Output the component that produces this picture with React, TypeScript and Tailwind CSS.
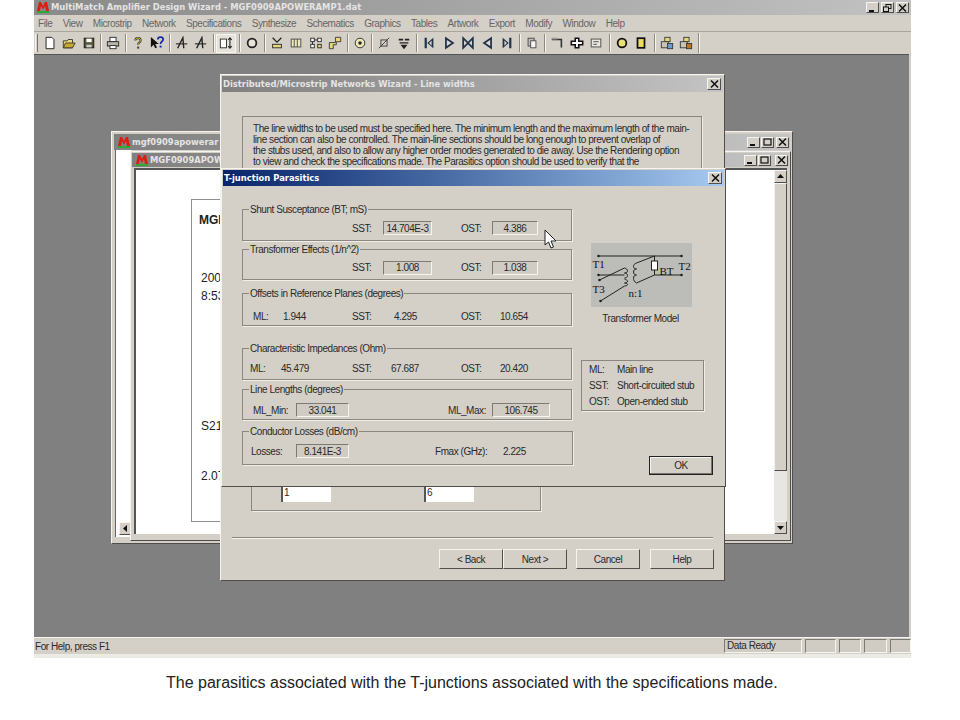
import React from "react";

const raised = "border border-t-[#f5f4f0] border-l-[#f5f4f0] border-r-[#4f4e4a] border-b-[#4f4e4a] bg-[#d4d0c8]";
const sunken = "border border-t-[#7c7a74] border-l-[#7c7a74] border-r-[#f5f4f0] border-b-[#f5f4f0] bg-[#d0ccc4]";
const ui = "font-['Liberation_Sans',Arial,sans-serif] text-[10px] tracking-[-0.45px] text-[#2a2a2a]";
const titleFont = "font-['DejaVu_Sans',Verdana,sans-serif] font-bold text-[8.4px] tracking-normal text-[#e4e4e4] whitespace-nowrap";

const Logo = () => (
    <svg width="14" height="13" viewBox="0 0 14 13" className="shrink-0">
        <path d="M1 10 L3 1 L5 1 L7 5 L9 1 L11 1 L13 10 L10 10 L9 5 L7 9 L5 5 L4 10 Z" fill="#e01b10" />
        <rect x="1" y="10" width="12" height="2" fill="#2fa82f" />
    </svg>
);

const WinBtn = ({ kind, cls = "w-[13px] h-[11px]" }: { kind: "min" | "max" | "restore" | "close"; cls?: string }) => (
    <div className={`${raised} ${cls} flex items-center justify-center`}>
        <svg width="9" height="8" viewBox="0 0 9 8">
            {kind === "min" && <rect x="1" y="6" width="5" height="2" fill="#111" />}
            {kind === "max" && <rect x="1" y="1" width="7" height="6" fill="none" stroke="#111" strokeWidth="1.2" />}
            {kind === "restore" && (
                <g fill="none" stroke="#111">
                    <rect x="3" y="0.5" width="5" height="4" />
                    <rect x="0.5" y="3" width="5" height="4.5" fill="#d4d0c8" />
                </g>
            )}
            {kind === "close" && <path d="M1 0.5 L8 7.5 M8 0.5 L1 7.5" stroke="#111" strokeWidth="1.5" />}
        </svg>
    </div>
);

// toolbar glyphs, all drawn on a 16x16 grid
const icons: Record<string, React.ReactNode> = {
    newDoc: <path d="M3.5 1.5 H10 L12.5 4 V14.5 H3.5 Z" fill="#fff" stroke="#111" />,
    open: <g stroke="#333"><path d="M1.5 5.5 H6 L7 4 H12 V13.5 H1.5 Z" fill="#e8d878" /><path d="M1.5 13.5 L4 8 H15 L12 13.5 Z" fill="#c8a830" /></g>,
    save: <g><rect x="2.5" y="2.5" width="11" height="11" fill="#5a5a38" stroke="#111" /><rect x="5" y="3" width="6" height="4" fill="#fff" /><rect x="5" y="10" width="6" height="3" fill="#ccc" /></g>,
    print: <g stroke="#222"><rect x="4.5" y="1.5" width="7" height="5" fill="#fff" /><rect x="1.5" y="6.5" width="13" height="5" fill="#b8b4ac" /><rect x="4.5" y="11" width="7" height="3.5" fill="#fff" /></g>,
    help: <g><path d="M5 5 C5 1.5 11 1.5 11 5 C11 7.5 8 7 8 10" fill="none" stroke="#333" strokeWidth="2.4" /><path d="M5 5 C5 1.5 11 1.5 11 5 C11 7.5 8 7 8 10" fill="none" stroke="#e8d020" strokeWidth="1" /><rect x="7" y="12" width="2.4" height="2.4" fill="#444" /></g>,
    whats: <g><path d="M1 1 L1 13 L4 10 L6 14 L8 13 L6 9 L10 9 Z" fill="#111" /><path d="M9 4 C9 0.5 15 0.5 15 4 C15 6.5 12 6 12 9" fill="none" stroke="#1a2aa0" strokeWidth="2" /><rect x="11" y="11" width="2.2" height="2.2" fill="#1a2aa0" /></g>,
    a: <g fill="none" stroke="#222" strokeWidth="1.6"><path d="M3 14 L9 2 L10 14" /><path d="M1 9 H14" strokeWidth="1.2" /></g>,
    rect: <g><rect x="1.5" y="3.5" width="7" height="10" fill="#fff" stroke="#222" /><path d="M12.5 2 V14 M10.5 4.5 L12.5 2 L14.5 4.5 M10.5 11.5 L12.5 14 L14.5 11.5" fill="none" stroke="#222" strokeWidth="1.2" /></g>,
    ring: <circle cx="8" cy="8" r="5" fill="#e8e4d8" stroke="#222" strokeWidth="2" />,
    stub: <g stroke="#222" fill="none"><path d="M3 2 L8 7 L13 2" strokeWidth="1.4" /><rect x="3" y="9.5" width="10" height="4" fill="#e8d878" /></g>,
    bars: <g stroke="#444"><rect x="2.5" y="3.5" width="11" height="9" fill="#ece8b8" /><path d="M6 3.5 V12.5 M9.5 3.5 V12.5" /></g>,
    net: <g stroke="#222" fill="#fff"><rect x="2" y="2.5" width="4" height="4" /><rect x="10" y="2.5" width="4" height="4" /><rect x="2" y="9.5" width="4" height="4" /><rect x="10" y="9.5" width="4" height="4" fill="#e8d878" /><path d="M6 4.5 H10 M4 6.5 V9.5" /></g>,
    pipe: <path d="M8.5 1.5 H14.5 V6.5 H9.5 V10 H6 V14.5 H1.5 V7.5 H8.5 Z" fill="#e8d878" stroke="#333" />,
    target: <g><circle cx="8" cy="8" r="5.5" fill="#ece8b8" stroke="#222" /><circle cx="8" cy="8" r="2" fill="#222" /></g>,
    cross: <g stroke="#333" fill="none"><rect x="4.5" y="4.5" width="7" height="7" /><path d="M2 14 L14 2" /></g>,
    updown: <g fill="#222"><path d="M2 3 H7 V5 H2 Z M9 3 H14 V5 H9 Z M3 7 H13 V8.5 H3 Z" /><path d="M4 10 H12 L8 15 Z" /></g>,
    barL: <g fill="#1f3248"><rect x="3" y="2" width="2.5" height="12" /><path d="M13 2 V14 L6 8 Z M11 5 V11 L8 8 Z" fillRule="evenodd" /></g>,
    right: <path d="M4.5 2.5 L12.5 8 L4.5 13.5 Z" fill="#dcd8d0" stroke="#1f3248" strokeWidth="2" />,
    bow: <path d="M2.5 2.5 L8 8 L2.5 13.5 Z M13.5 2.5 L8 8 L13.5 13.5 Z" fill="#dcd8d0" stroke="#1f3248" strokeWidth="2" />,
    left: <path d="M11.5 2.5 L3.5 8 L11.5 13.5 Z" fill="#dcd8d0" stroke="#1f3248" strokeWidth="2" />,
    barR: <g fill="#1f3248"><rect x="10.5" y="2" width="2.5" height="12" /><path d="M3 2 V14 L10 8 Z M5 5 V11 L8 8 Z" fillRule="evenodd" /></g>,
    copy: <g stroke="#444"><rect x="3.5" y="2.5" width="7" height="9" fill="#bbb" /><rect x="6.5" y="5.5" width="6" height="8" fill="#f4f4f0" /></g>,
    bend: <g fill="none" stroke="#333"><path d="M2 4 H13 V13" strokeWidth="1.8" /><path d="M2 3 H8" stroke="#999" strokeWidth="2" /></g>,
    plus: <path d="M6 2.5 H10 V6 H14.5 V10 H10 V13.5 H6 V10 H1.5 V6 H6 Z" fill="#fff" stroke="#111" strokeWidth="1.8" />,
    panel: <g stroke="#444" fill="none"><rect x="2.5" y="3.5" width="11" height="9" fill="#e8e6de" /><path d="M5 6.5 H11 M5 9.5 H9" /></g>,
    disc: <circle cx="8" cy="8" r="5" fill="#e8e070" stroke="#111" strokeWidth="2" />,
    tall: <rect x="4" y="2.5" width="8" height="11" fill="#ecdc60" stroke="#111" strokeWidth="2" />,
    lockA: <g stroke="#333"><rect x="5.5" y="1.5" width="6" height="5" fill="#e8d878" /><rect x="1.5" y="6.5" width="8" height="7" fill="#c8c4b0" /><rect x="8.5" y="8.5" width="6" height="6" fill="#6a9ad0" /></g>,
    lockB: <g stroke="#333"><rect x="5.5" y="1.5" width="6" height="5" fill="#e8d878" /><rect x="1.5" y="6.5" width="8" height="7" fill="#c8c4b0" /><rect x="8.5" y="8.5" width="6" height="6" fill="#b87820" /></g>,
};

const Icon = ({ name, active }: { name: string; active?: boolean }) => (
    <div className={`w-[19.5px] h-[19px] flex items-center justify-center shrink-0 ${active ? "border border-[#f5f4f0] bg-[#e6e3dc]" : ""}`}>
        <svg width="14" height="14" viewBox="0 0 16 16">{icons[name]}</svg>
    </div>
);

const Sep = ({ cls = "" }: { cls?: string }) => (
    <div className={`w-[5px] h-[18px] shrink-0 flex justify-center ${cls}`}>
        <div className="w-[2px] h-full border-l border-l-[#8d8a83] border-r border-r-[#f5f4f0]" />
    </div>
);

const menus = ["File", "View", "Microstrip", "Network", "Specifications", "Synthesize", "Schematics", "Graphics", "Tables", "Artwork", "Export", "Modify", "Window", "Help"];

const Toolbar = () => (
    <div className="h-[22px] flex items-center pl-[1px] bg-[#d4d0c8]">
        <div className="w-[3px] h-[18px] border-l border-l-[#f5f4f0] border-r border-r-[#77746d] mr-[2px]" />
        <Icon name="newDoc" /><Icon name="open" /><Icon name="save" />
        <Sep /><Icon name="print" />
        <Sep /><Icon name="help" /><Icon name="whats" />
        <Sep /><Icon name="a" /><Icon name="a" />
        <Sep /><Icon name="rect" active />
        <Sep cls="ml-[2px]" /><Icon name="ring" />
        <Sep /><Icon name="stub" /><Icon name="bars" /><Icon name="net" /><Icon name="pipe" />
        <Sep /><Icon name="target" />
        <Sep /><Icon name="cross" /><Icon name="updown" />
        <Sep cls="ml-[1px]" /><Icon name="barL" /><Icon name="right" /><Icon name="bow" /><Icon name="left" /><Icon name="barR" />
        <Sep /><Icon name="copy" />
        <Sep cls="ml-[1px]" /><Icon name="bend" /><Icon name="plus" /><Icon name="panel" />
        <Sep cls="ml-[1px]" /><Icon name="disc" /><Icon name="tall" />
        <Sep cls="ml-[1px]" /><Icon name="lockA" /><Icon name="lockB" />
        <div className="w-[2px] h-[20px] ml-[2px] border-r border-r-[#f5f4f0] border-l border-l-[#8d8a83]" />
    </div>
);

const Group = ({ title, cls, children }: { title: string; cls: string; children?: React.ReactNode }) => (
    <div className={`relative border border-[#8a8780] shadow-[1px_1px_0_#f0eee8] flex items-center ${cls}`}>
        <span className="absolute -top-[6px] left-[6px] leading-[12px] bg-[#d4d0c8] px-[1px] whitespace-nowrap">{title}</span>
        {children}
    </div>
);

const Field = ({ cls, children }: { cls: string; children: React.ReactNode }) => (
    <div className={`${sunken} h-[14px] flex items-center justify-center ${cls}`}>{children}</div>
);

const SstOstRow = ({ sst, ost }: { sst: string; ost: string }) => (
    <>
        <span className="ml-[109px] w-[31px]">SST:</span>
        <Field cls="w-[49px]">{sst}</Field>
        <span className="ml-[29px] w-[31px]">OST:</span>
        <Field cls="w-[46px]">{ost}</Field>
    </>
);

const TransformerModel = () => (
    <svg width="101" height="64" viewBox="0 0 100 64" className="bg-[#bcbcb8] block">
        <g fill="none" stroke="#222" strokeWidth="1">
            <path d="M7 13 H90 M7 32 H33 M63 32 H90 M63 13 V18 M63 27 V32" />
            <rect x="60" y="18" width="6" height="9" fill="#fff" />
            <path d="M8 37 L33 25 M9 58 L33 43 M45 20 L63 13 M45 40 L63 32" />
            <path d="M33 25 C37 26 37 30 33 30 C37 30 37 35 33 35 M33 36 C37 37 37 40 33 40 C37 40 37 43 33 43" />
            <path d="M45 20 C41 21 41 26 45 26 C41 26 41 32 45 32 C41 32 41 38 45 40" />
        </g>
        <g fill="#222">
            <circle cx="7" cy="13" r="1.3" /><circle cx="90" cy="13" r="1.3" /><circle cx="7" cy="32" r="1.3" /><circle cx="90" cy="32" r="1.3" /><circle cx="8" cy="37" r="1.3" /><circle cx="9" cy="58" r="1.3" />
        </g>
        <g className="font-['Liberation_Serif',serif]" fontSize="11" fill="#111" letterSpacing="0">
            <text x="1" y="25">T1</text>
            <text x="87" y="27">T2</text>
            <text x="1" y="50">T3</text>
            <text x="68" y="32">BT</text>
            <text x="37" y="54">n:1</text>
        </g>
    </svg>
);

const TJunctionDialog = () => (
    <div className={`absolute left-[187px] top-[113px] w-[505px] h-[319px] bg-[#d4d0c8] border border-[#f5f4f0] border-r-[#4f4e4a] border-b-[#4f4e4a] p-[1px] flex flex-col ${ui}`}>
        <div className="h-[16px] shrink-0 bg-gradient-to-r from-[#0a246a] to-[#a6caf0] flex items-center justify-between pl-[1px] pr-[2px]">
            <span className={`${titleFont} !text-white`}>T-junction Parasitics</span>
            <WinBtn kind="close" cls="w-[14px] h-[12px]" />
        </div>
        <div className="flex pt-[23px] pl-[19px]">
            <div className="flex flex-col w-[330px]">
                <Group title="Shunt Susceptance (BT; mS)" cls="h-[32px] pt-[6px]"><SstOstRow sst="14.704E-3" ost="4.386" /></Group>
                <Group title="Transformer Effects (1/n^2)" cls="h-[31px] pt-[6px] mt-[8px]"><SstOstRow sst="1.008" ost="1.038" /></Group>
                <Group title="Offsets in Reference Planes (degrees)" cls="h-[33px] pt-[13px] mt-[13px]">
                    <span className="ml-[10px] w-[30px]">ML:</span><span className="w-[69px]">1.944</span>
                    <span className="w-[42px]">SST:</span><span className="w-[67px]">4.295</span>
                    <span className="w-[39px]">OST:</span><span>10.654</span>
                </Group>
                <Group title="Characteristic Impedances (Ohm)" cls="h-[32px] pt-[8px] mt-[22px]">
                    <span className="ml-[7px] w-[31px]">ML:</span><span className="w-[71px]">45.479</span>
                    <span className="w-[39px]">SST:</span><span className="w-[70px]">67.687</span>
                    <span className="w-[39px]">OST:</span><span>20.420</span>
                </Group>
                <Group title="Line Lengths (degrees)" cls="h-[31px] pt-[11px] mt-[9px]">
                    <span className="ml-[10px] w-[43px]">ML_Min:</span><Field cls="w-[53px]">33.041</Field>
                    <span className="ml-[99px] w-[44px]">ML_Max:</span><Field cls="w-[58px]">106.745</Field>
                </Group>
                <Group title="Conductor Losses (dB/cm)" cls="h-[34px] pt-[6px] mt-[11px] w-[331px]">
                    <span className="ml-[8px] w-[45px]">Losses:</span><Field cls="w-[53px]">8.141E-3</Field>
                    <span className="ml-[86px] w-[68px]">Fmax (GHz):</span><span>2.225</span>
                </Group>
            </div>
            <div className="flex flex-col ml-[9px] w-[123px]">
                <div className="ml-[10px] mt-[34px]"><TransformerModel /></div>
                <div className="ml-[9px] w-[101px] text-center mt-[6px] leading-[12px]">Transformer Model</div>
                <div className="mt-[35px] h-[51px] border border-[#8a8780] shadow-[1px_1px_0_#f0eee8] grid grid-cols-[28px_1fr] pl-[7px] content-around">
                    <span>ML:</span><span>Main line</span>
                    <span>SST:</span><span>Short-circuited stub</span>
                    <span>OST:</span><span>Open-ended stub</span>
                </div>
                <div className="flex justify-end mt-[45px] -mr-[9px]">
                    <div className="w-[64px] h-[19px] border border-[#222] flex items-center justify-center shadow-[inset_-1px_-1px_0_#77746d,inset_1px_1px_0_#f5f4f0]">OK</div>
                </div>
            </div>
        </div>
    </div>
);

const WizardButton = ({ cls, children }: { cls: string; children: React.ReactNode }) => (
    <div className={`${raised} h-[20px] flex items-center justify-center ${cls}`}>{children}</div>
);

const WizardDialog = () => (
    <div className={`absolute left-[186px] top-[19px] w-[505px] h-[507px] bg-[#d4d0c8] border border-[#f5f4f0] border-r-[#4f4e4a] border-b-[#4f4e4a] p-[1px] flex flex-col ${ui}`}>
        <div className="h-[16px] shrink-0 bg-gradient-to-r from-[#808080] to-[#c4c4c4] flex items-center justify-between pl-[1px] pr-[2px]">
            <span className={titleFont}>Distributed/Microstrip Networks Wizard - Line widths</span>
            <WinBtn kind="close" cls="w-[14px] h-[12px]" />
        </div>
        <div className="ml-[20px] mt-[24px] w-[460px] h-[120px] shrink-0 border border-[#8a8780] shadow-[1px_1px_0_#f0eee8] pl-[10px] pt-[6px] leading-[11px] whitespace-nowrap">
            The line widths to be used must be specified here. The minimum length and the maximum length of the main-<br />
            line section can also be controlled. The main-line sections should be long enough to prevent overlap of<br />
            the stubs used, and also to allow any higher order modes generated to die away. Use the Rendering option<br />
            to view and check the specifications made. The Parasitics option should be used to verify that the
        </div>
        <div className="ml-[29px] mt-[64px] w-[290px] h-[211px] shrink-0 border border-[#8a8780] shadow-[1px_1px_0_#f0eee8] flex flex-col justify-end pb-[8px]">
            <div className="flex">
                <div className="ml-[29px] w-[50px] h-[17px] bg-white border-l-2 border-t border-[#555] pl-[1px] leading-[14px]">1</div>
                <div className="ml-[93px] w-[50px] h-[17px] bg-white border-l-2 border-t border-[#555] pl-[1px] leading-[14px]">6</div>
            </div>
        </div>
        <div className="ml-[10px] mt-[26px] w-[481px] h-[2px] shrink-0 border-t border-t-[#8a8780] border-b border-b-[#f5f4f0]" />
        <div className="flex ml-[217px] mt-[10px] shrink-0">
            <WizardButton cls="w-[64px]">&lt; Back</WizardButton>
            <WizardButton cls="w-[64px]">Next &gt;</WizardButton>
            <WizardButton cls="w-[64px] ml-[9px]">Cancel</WizardButton>
            <WizardButton cls="w-[64px] ml-[10px]">Help</WizardButton>
        </div>
    </div>
);

const ScrollBtn = ({ d, cls }: { d: string; cls?: string }) => (
    <div className={`${raised} w-[13px] h-[13px] flex items-center justify-center shrink-0 ${cls ?? ""}`}>
        <svg width="7" height="7" viewBox="0 0 7 7"><path d={d} fill="#111" /></svg>
    </div>
);

const ChildWindows = () => (
    <div className={`absolute left-[77px] top-[76px] w-[682px] h-[413px] bg-[#d4d0c8] border border-[#f5f4f0] border-r-[#4f4e4a] border-b-[#4f4e4a] ${ui}`}>
        <div className="h-[16px] mx-[2px] mt-[2px] bg-gradient-to-r from-[#808080] to-[#c4c4c4] flex items-center justify-between pr-[1px]">
            <div className="flex items-center gap-[1px] pl-[3px]"><Logo /><span className={titleFont}>mgf0909apowerar</span></div>
            <div className="flex gap-[1px]"><WinBtn kind="min" /><WinBtn kind="max" /><div className="ml-[1px]"><WinBtn kind="close" /></div></div>
        </div>
        <div className="absolute left-[3px] top-[18px] bottom-[6px] w-[16px] bg-white border-l border-[#666] flex flex-col justify-end">
            <ScrollBtn d="M5 0 L1 3.5 L5 7 Z" cls="ml-[3px] mb-[2px]" />
        </div>
        <div className="absolute left-[18px] top-[19px] w-[661px] h-[390px] bg-[#d4d0c8] border border-[#f5f4f0] border-r-[#4f4e4a] border-b-[#4f4e4a]">
            <div className="h-[14px] m-[1px] bg-gradient-to-r from-[#808080] to-[#c4c4c4] flex items-center justify-between pr-[1px]">
                <div className="flex items-center gap-[1px] pl-[3px]"><Logo /><span className={titleFont}>MGF0909APOWERA</span></div>
                <div className="flex gap-[1px]"><WinBtn kind="min" /><WinBtn kind="max" /><div className="ml-[3px]"><WinBtn kind="close" /></div></div>
            </div>
            <div className="flex mx-[3px] border-l-2 border-t-2 border-[#555]">
                <div className="flex-1 h-[364px] bg-white pl-[55px] pt-[29px]">
                    <div className="w-[400px] h-[323px] border border-[#8f8f8f] pl-[9px] pt-[11px] font-['Liberation_Sans',Arial,sans-serif] text-[12px] tracking-normal text-[#222]">
                        <div className="font-bold -ml-[2px]">MGF</div>
                        <div className="mt-[40px]">200</div>
                        <div className="mt-0">8:53</div>
                        <div className="mt-[112px]">S21</div>
                        <div className="mt-[32px]">2.07</div>
                    </div>
                </div>
                <div className="w-[13px] h-[364px] flex flex-col bg-[#e8e6e2]">
                    <ScrollBtn d="M3.5 1 L7 5 L0 5 Z" />
                    <div className={`${raised} h-[288px]`} />
                    <div className="flex-1" />
                    <ScrollBtn d="M0 2 L7 2 L3.5 6 Z" />
                </div>
            </div>
        </div>
    </div>
);

const Cursor = () => (
    <svg width="14" height="20" viewBox="0 0 14 20" className="absolute left-[510px] top-[174px]">
        <path d="M1 1 V16 L4.5 13 L7 19 L9.5 18 L7 12 L12 12 Z" fill="#fff" stroke="#222" strokeWidth="1" />
    </svg>
);

export default function App() {
    return (
        <div className="w-[960px] h-[720px] bg-white overflow-hidden">
            <div className={`ml-[34px] w-[877px] h-[654px] flex flex-col bg-[#d4d0c8] ${ui}`}>
                <div className="h-[15px] shrink-0 bg-gradient-to-r from-[#8a8a8a] to-[#c2c2c2] flex items-center justify-between pr-[2px]">
                    <div className="flex items-center gap-[1px] pl-[2px]"><Logo /><span className={titleFont}>MultiMatch Amplifier Design Wizard - MGF0909APOWERAMP1.dat</span></div>
                    <div className="flex gap-[2px]"><WinBtn kind="min" /><WinBtn kind="restore" /><WinBtn kind="close" /></div>
                </div>
                <div className="h-[17px] shrink-0 flex items-center gap-[10.4px] pl-[4px] !text-[#666] border-b border-b-[#aaa69e]">
                    {menus.map(m => <span key={m}>{m}</span>)}
                </div>
                <Toolbar />
                <div className="relative flex-1 bg-[#808080] border-t border-[#555] mr-[2px]">
                    <ChildWindows />
                    <WizardDialog />
                    <TJunctionDialog />
                    <Cursor />
                </div>
                <div className="h-[17px] shrink-0 flex items-center border-t border-t-[#f5f4f0]">
                    <span className="pl-[1px] flex-1">For Help, press F1</span>
                    <div className="flex gap-[3px] h-[14px]">
                        <div className={`${sunken} w-[78px] pl-[2px] leading-[12px]`}>Data Ready</div>
                        <div className={`${sunken} w-[31px]`} />
                        <div className={`${sunken} w-[22px]`} />
                        <div className={`${sunken} w-[23px]`} />
                        <div className={`${sunken} w-[21px]`} />
                    </div>
                </div>
            </div>
            <div className="ml-[34px] w-[877px] h-[4px] bg-[#ecebe6]" />
            <p className="mt-[16px] ml-[166px] font-['Liberation_Sans',Arial,sans-serif] text-[16px] leading-[18px] text-[#222] whitespace-nowrap">The parasitics associated with the T-junctions associated with the specifications made.</p>
        </div>
    );
}
